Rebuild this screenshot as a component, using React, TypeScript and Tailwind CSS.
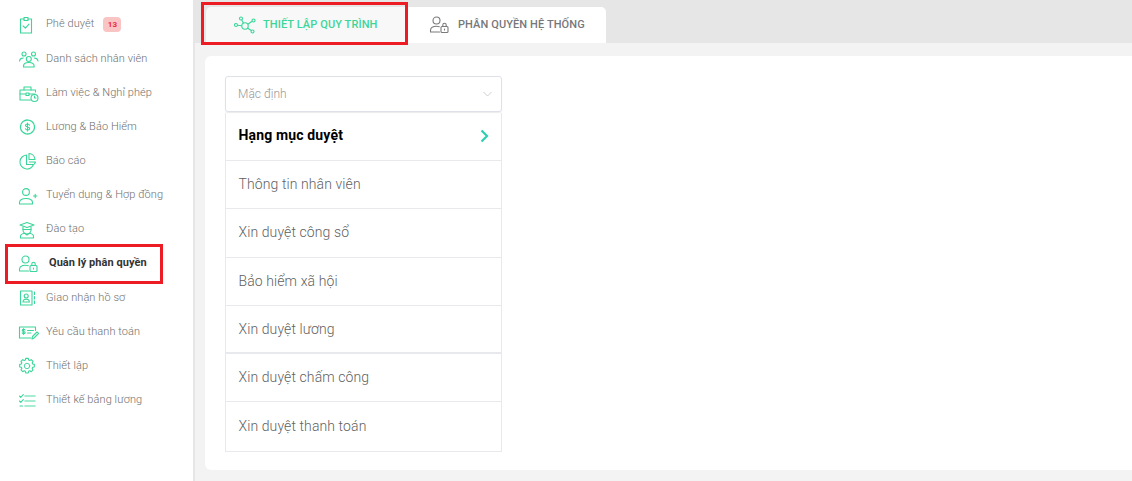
import type { ReactNode } from "react";

const GREEN = "#3ad69a";

function Ico({ children, w = 20, h = 20, color = GREEN, sw = 1.1 }: { children: ReactNode; w?: number; h?: number; color?: string; sw?: number }) {
  return (
    <svg width={w} height={h} viewBox={`0 0 ${w} ${h}`} fill="none" stroke={color} strokeWidth={sw} strokeLinecap="round" strokeLinejoin="round">
      {children}
    </svg>
  );
}

const ApproveIcon = () => (
  <Ico>
    <path d="M6 4H2.500v14h11V4H10" />
    <path d="M6 2.500h4V5.500H6z" />
    <path d="M5.200 11l2.200 2.200 3.600-4" />
  </Ico>
);
const PeopleIcon = () => (
  <Ico w={22}>
    <circle cx="6" cy="5" r="2" />
    <circle cx="15.500" cy="5" r="2" />
    <circle cx="10.800" cy="10" r="2.500" />
    <path d="M1.500 12c.3-2 2-3 3.700-3M20 12c-.3-2-2-3-3.700-3" />
    <path d="M5.500 18v-1c0-2 2-3.500 5.300-3.500s5.300 1.500 5.300 3.500v1z" />
  </Ico>
);
const WorkIcon = () => (
  <Ico w={22}>
    <path d="M2 7h15.500v2M2 7v10h10.500" />
    <path d="M6 7V4h7v3" />
    <path d="M2 11h5.500M11 11h6" />
    <path d="M8 10h3v2.500H8z" />
    <circle cx="16.500" cy="15" r="3.500" />
    <path d="M16.500 13v2h1.500" />
  </Ico>
);
const SalaryIcon = () => (
  <Ico>
    <circle cx="9.500" cy="10" r="7" strokeDasharray="3.200 1" strokeWidth={1.300} />
    <path d="M11.500 8.200C11.300 7.400 10.500 7 9.500 7c-1.100 0-2 .6-2 1.500 0 2 4.200 1.100 4.200 3.100 0 1-.9 1.500-2.100 1.500-1.100 0-1.900-.5-2.200-1.400M9.500 6v8" />
  </Ico>
);
const ReportIcon = () => (
  <Ico>
    <path d="M8.500 4a7 7 0 1 0 7 9.500H8.500z" />
    <path d="M11 2.500a6.500 6.500 0 0 1 6 6H11z" />
    <path d="M11.500 11h6l-1 2" />
  </Ico>
);
const RecruitIcon = () => (
  <Ico w={20}>
    <circle cx="8" cy="6" r="3.400" />
    <path d="M1.500 18v-1.500c0-2.700 2.800-4 6.500-4s6.500 1.300 6.500 4V18z" />
    <path d="M15.500 10h3.500M17.200 8.200v3.600" />
  </Ico>
);
const TrainingIcon = () => (
  <Ico>
    <path d="M2 5l7-2.500L16 5l-7 2.500z" />
    <path d="M5 7v3a4 4 0 0 0 8 0V7" />
    <path d="M5 9.500h8" />
    <path d="M2.500 18v-1.500c0-1.800 2-3 4.500-3.200L9 15l2-1.700c2.500.2 4.500 1.400 4.500 3.200V18z" />
  </Ico>
);
function RoleIcon({ color = GREEN }: { color?: string }) {
  return (
    <Ico w={20} color={color}>
      <circle cx="7.500" cy="5.500" r="3.500" />
      <path d="M1.500 17v-1.500c0-2.600 2.500-4.200 6-4.200 1 0 2 .2 2.800.4M1.500 17h9" />
      <rect x="12" y="11.500" width="7" height="6" rx="1" />
      <path d="M13.800 11.500V10a1.700 1.700 0 0 1 3.400 0v1.500" />
      <path d="M15.500 14v1" />
    </Ico>
  );
}
const HandoverIcon = () => (
  <Ico>
    <path d="M2.500 3H14v14H2.500z" />
    <circle cx="8.200" cy="8" r="2" />
    <path d="M5 14c0-1.800 1.300-2.800 3.200-2.800s3.200 1 3.200 2.800z" />
    <path d="M16.500 4v2.500M16.500 8.500V11M16.500 13v2.500" />
  </Ico>
);
const PaymentIcon = () => (
  <Ico w={22}>
    <path d="M13 16H1.500V5h16v3.500" />
    <path d="M7 8c-.3-.5-.8-.7-1.400-.7-.8 0-1.400.4-1.400 1.100 0 1.400 3 .8 3 2.200 0 .7-.6 1.100-1.500 1.100-.6 0-1.200-.3-1.500-.8M5.600 6.500v6" />
    <path d="M9.500 8.500h6M9.500 11h3.500" />
    <path d="M14 17l.5-2.500 4.500-4.500 1.500 1.500-4.500 4.500z" />
  </Ico>
);
const SettingIcon = () => (
  <Ico>
    <g transform="translate(0.500 1.500) scale(0.85)">
      <circle cx="10" cy="10" r="3.200" />
      <path d="M8.500 1h3l.4 1.900 1.400.6 1.700-1 2.100 2.100-1 1.700.6 1.400 1.900.4v3l-1.900.4-.6 1.400 1 1.700-2.100 2.100-1.700-1-1.400.6-.4 1.900h-3l-.4-1.900-1.400-.6-1.700 1-2.100-2.100 1-1.700-.6-1.400-1.900-.4v-3l1.900-.4.6-1.400-1-1.700 2.100-2.100 1.700 1 1.400-.6z" strokeWidth={1.300} />
    </g>
  </Ico>
);
const PayrollIcon = () => (
  <Ico>
    <path d="M1.500 5l1.300 1.300L5.300 3.500" />
    <path d="M7 5h10M7 10h10M7 15h10" strokeWidth={1.600} opacity={0.6} />
    <path d="M1.500 10l1.300 1.300L5.300 8.500" />
    <path d="M2 15h2.500" />
  </Ico>
);

const NAV = [
  { label: "Phê duyệt", icon: <ApproveIcon />, badge: "13" },
  { label: "Danh sách nhân viên", icon: <PeopleIcon /> },
  { label: "Làm việc & Nghỉ phép", icon: <WorkIcon /> },
  { label: "Lương & Bảo Hiểm", icon: <SalaryIcon /> },
  { label: "Báo cáo", icon: <ReportIcon /> },
  { label: "Tuyển dụng & Hợp đồng", icon: <RecruitIcon /> },
  { label: "Đào tạo", icon: <TrainingIcon /> },
  { label: "Quản lý phân quyền", icon: <RoleIcon />, active: true },
  { label: "Giao nhận hồ sơ", icon: <HandoverIcon /> },
  { label: "Yêu cầu thanh toán", icon: <PaymentIcon /> },
  { label: "Thiết lập", icon: <SettingIcon /> },
  { label: "Thiết kế bảng lương", icon: <PayrollIcon /> },
];

const ROWS = [
  "Hạng mục duyệt",
  "Thông tin nhân viên",
  "Xin duyệt công sổ",
  "Bảo hiểm xã hội",
  "Xin duyệt lương",
  "Xin duyệt chấm công",
  "Xin duyệt thanh toán",
];

function Sidebar() {
  return (
    <aside className="w-[195px] h-full shrink-0 bg-white border-r-[2px] border-[#e6e6e6] pt-[7.500px]">
      {NAV.map((item) => (
        <div key={item.label} className="relative h-[34.200px] flex items-center pl-[18px]">
          <span className="w-[28px] shrink-0 flex">{item.icon}</span>
          {item.active ? (
            <span className="ml-[3px] pb-[2px] text-[11px] font-bold text-[#333] tracking-[0.05px]">{item.label}</span>
          ) : (
            <span className="text-[11px] font-light text-[#6f6f6f] tracking-[0.08px]">{item.label}</span>
          )}
          {item.badge && (
            <span className="ml-[9px] w-[18px] h-[15px] rounded-[4px] bg-[#f9c4c4] text-[#ee2b3b] text-[8px] font-bold flex items-center justify-center">
              {item.badge}
            </span>
          )}
          {item.active && (
            <span className="absolute left-[5px] top-[-3px] w-[158px] h-[40px] border-[3px] border-[#ed1c24]" />
          )}
        </div>
      ))}
    </aside>
  );
}

function Tabs() {
  return (
    <div className="h-[43px] bg-[#e6e6e6] pt-[7px] pl-[11px] flex shrink-0">
      <div className="relative w-[202px] h-[36px] rounded-tl-[5px] bg-[#f8f8f8] flex items-center pl-[28px]">
        <svg width="22" height="18" viewBox="0 0 22 18" fill="none" stroke={GREEN} strokeWidth="1.100">
          <circle cx="11" cy="10" r="3.200" />
          <circle cx="2" cy="9" r="1.500" />
          <circle cx="7" cy="2.500" r="1.500" />
          <circle cx="19.500" cy="4.500" r="1.500" />
          <circle cx="18.500" cy="15.500" r="1.500" />
          <path d="M3.500 9.200L7.800 9.700M7.700 4l1.800 3.200M18.200 5.300L13.800 8.300M17.300 14.500L13.400 12" />
        </svg>
        <span className="ml-[7px] text-[11px] font-medium text-[#3ed598] tracking-[0.1px]">THIẾT LẬP QUY TRÌNH</span>
        <span className="absolute left-[-5px] top-[-5px] w-[207px] h-[43px] border-[3px] border-[#ed1c24]" />
      </div>
      <div className="w-[198px] h-[36px] rounded-tr-[5px] bg-white flex items-center pl-[21px]">
        <RoleIcon color="#7a7a7a" />
        <span className="ml-[9px] text-[11px] font-medium text-[#77777a] tracking-[0.1px]">PHÂN QUYỀN HỆ THỐNG</span>
      </div>
    </div>
  );
}

function StageCard() {
  return (
    <div className="ml-[10px] mt-[13px] h-[414px] bg-white rounded-l-[6px] pt-[20px] pl-[20px]">
      <div className="w-[277px] h-[36px] border border-[#dfe1e8] rounded-[3px] flex items-center justify-between pl-[12px] pr-[9px] text-[12px] font-light text-[#9a9a9a] shadow-[0_1px_1px_rgba(0,0,0,0.08)]">
        <span>Mặc định</span>
        <svg width="9" height="6" viewBox="0 0 9 6" fill="none" stroke="#cfcfcf" strokeWidth="1">
          <path d="M0.500 1L4.500 5l4-4" />
        </svg>
      </div>
      <div className="mt-[0.700px] w-[277px] border-x border-b border-[#e8e9ec]">
        {ROWS.map((row, i) => (
          <div
            key={row}
            className={`h-[48.300px] flex items-center justify-between pl-[12.500px] pr-[12px] border-[#e8e9ec] ${
              i === 4 ? "border-b-2" : i < ROWS.length - 1 ? "border-b" : ""
            }`}
          >
            {i === 0 ? (
              <span className="pb-[2px] text-[14px] font-bold text-black tracking-[0.15px]">{row}</span>
            ) : (
              <span className="text-[14px] font-light text-[#5f5f5f] tracking-[0.1px]">{row}</span>
            )}
            {i === 0 && (
              <svg width="9" height="14" viewBox="0 0 9 14" fill="none" stroke="#2ecfb0" strokeWidth="2.200">
                <path d="M1.500 1.500L7 7l-5.500 5.500" />
              </svg>
            )}
          </div>
        ))}
      </div>
    </div>
  );
}

export default function App() {
  return (
    <div className="w-[1132px] h-[481px] flex overflow-hidden bg-[#f3f3f3] font-['Roboto',sans-serif]">
      <Sidebar />
      <main className="flex-1 min-w-0 flex flex-col">
        <Tabs />
        <StageCard />
      </main>
    </div>
  );
}
